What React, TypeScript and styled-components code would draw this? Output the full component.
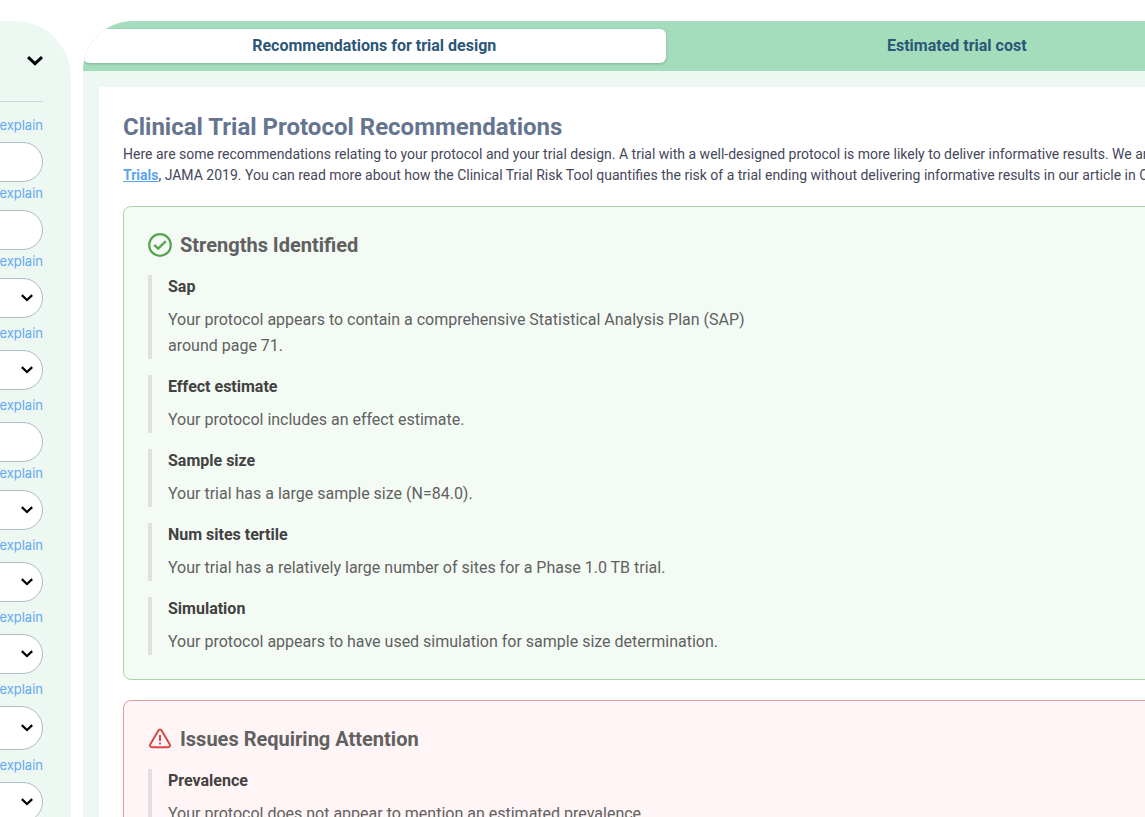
import React from "react";
import styled, { createGlobalStyle } from "styled-components";

const GlobalStyle = createGlobalStyle`
  * { box-sizing: border-box; }
  body {
    margin: 0;
    background: #ffffff;
    font-family: Roboto, "Liberation Sans", sans-serif;
    overflow: hidden;
  }
  h1, h2, h3, p { margin: 0; }
`;

const Page = styled.div`
  display: flex;
  align-items: stretch;
  gap: 12px;
  height: 100vh;
  padding-top: 21px;
  overflow: hidden;
`;

const Sidebar = styled.aside`
  flex: 0 0 320px;
  margin-left: -249px;
  padding: 0 28px;
  background: #eef8f3;
  border-top-right-radius: 56px;
  overflow: hidden;
`;

const SidebarHead = styled.div`
  display: flex;
  align-items: center;
  justify-content: flex-end;
  height: 81px;
  margin-bottom: 12px;
  border-bottom: 1px solid #c9d6da;
`;

const CollapseButton = styled.button`
  display: flex;
  padding: 0;
  border: 0;
  background: none;
  color: #000000;
`;

const Field = styled.div<{ $gap: number }>`
  margin-bottom: ${(p) => p.$gap}px;
`;

const ExplainLink = styled.a`
  display: block;
  margin-bottom: 6px;
  color: #62a8f2;
  font: 400 13px/22px Inter, "Open Sans", sans-serif;
  text-align: right;
  text-decoration: none;
`;

const TextInput = styled.input`
  display: block;
  width: 100%;
  height: 40px;
  border: 1px solid #b0bcc4;
  border-radius: 20px;
  background: #ffffff;
`;

const SelectWrap = styled.div`
  position: relative;
  svg {
    position: absolute;
    right: 10px;
    top: 50%;
    margin-top: -6px;
    pointer-events: none;
  }
`;

const SelectBox = styled.select<{ $tall?: boolean }>`
  display: block;
  width: 100%;
  height: ${(p) => (p.$tall ? 44 : 40)}px;
  border: 1px solid #b0bcc4;
  border-radius: 22px;
  background: #ffffff;
  appearance: none;
`;

const Main = styled.main`
  flex: none;
  width: calc(100% + 20px);
  display: flex;
  flex-direction: column;
  background: #eef8f3;
  border-top-left-radius: 50px;
  overflow: hidden;
`;

const Tabs = styled.div`
  display: flex;
  flex: none;
  height: 50px;
  padding: 8px 0;
  background: #a3ddbc;
`;

const Tab = styled.button<{ $active?: boolean }>`
  flex: 1;
  border: 0;
  border-radius: 6px;
  background: ${(p) => (p.$active ? "#ffffff" : "transparent")};
  box-shadow: ${(p) => (p.$active ? "0 1px 3px rgba(0, 0, 0, 0.2)" : "none")};
  color: #2c5777;
  font: 700 16px/24px Roboto, sans-serif;
`;

const Panel = styled.section`
  flex: 1;
  margin: 16px 16px 0;
  padding: 24px;
  background: #ffffff;
`;

const Title = styled.h1`
  margin-bottom: 1px;
  color: #66758f;
  font-size: 24px;
  line-height: 32px;
`;

const Intro = styled.p`
  margin-bottom: 20px;
  color: #45475a;
  font-size: 14px;
  line-height: 21px;
  white-space: nowrap;
`;

const IntroLink = styled.a`
  color: #5ba4f0;
  font-weight: 700;
`;

const Card = styled.section<{ $tone: "good" | "bad" }>`
  margin-bottom: 20px;
  padding: 24px;
  border: 1px solid ${(p) => (p.$tone === "good" ? "#a8d5a8" : "#e59a9a")};
  border-radius: 8px;
  background: ${(p) => (p.$tone === "good" ? "#f4fbf4" : "#fff5f6")};
`;

const CardTitle = styled.h2`
  display: flex;
  align-items: center;
  gap: 8px;
  color: #616161;
  font-size: 20px;
  line-height: 28px;
`;

const Item = styled.div`
  margin-top: 16px;
  padding-left: 16px;
  border-left: 4px solid #e0e0e0;
`;

const ItemTitle = styled.h3`
  margin-bottom: 8px;
  color: #424242;
  font-size: 16px;
  line-height: 24px;
`;

const ItemText = styled.p`
  max-width: 600px;
  color: #616161;
  font-size: 16px;
  line-height: 26px;
`;

const Chevron = ({ size }: { size: number }) => (
  <svg width={size} height={size} viewBox="0 0 12 12" fill="none" stroke="currentColor" strokeWidth="2.2" aria-hidden="true">
    <path d="M0.8 3.1 6 8 11.2 3.1" />
  </svg>
);

const CheckIcon = () => (
  <svg width="24" height="24" viewBox="0 0 24 24" fill="none" stroke="#5aa552" strokeWidth="2.2" aria-hidden="true">
    <circle cx="12" cy="12" r="10.8" />
    <path d="M6.2 11.8 10.2 15.6 17.8 8.2" strokeWidth="2.4" />
  </svg>
);

const WarningIcon = () => (
  <svg width="24" height="24" viewBox="0 0 24 24" fill="none" stroke="#d8483f" strokeWidth="2" strokeLinejoin="round" aria-hidden="true">
    <path d="M10.4 3.5 2.2 17.6a1.8 1.8 0 0 0 1.6 2.6h16.4a1.8 1.8 0 0 0 1.6-2.6L13.6 3.5a1.8 1.8 0 0 0-3.2 0Z" />
    <path d="M12 8v6M12 15.4v2" />
  </svg>
);

type FieldSpec = { kind: "input" | "select"; tall?: boolean };

const fields: FieldSpec[] = [
  { kind: "input" },
  { kind: "input" },
  { kind: "select" },
  { kind: "select" },
  { kind: "input" },
  { kind: "select" },
  { kind: "select" },
  { kind: "select" },
  { kind: "select", tall: true },
  { kind: "select" },
];

const strengths = [
  ["Sap", "Your protocol appears to contain a comprehensive Statistical Analysis Plan (SAP) around page 71."],
  ["Effect estimate", "Your protocol includes an effect estimate."],
  ["Sample size", "Your trial has a large sample size (N=84.0)."],
  ["Num sites tertile", "Your trial has a relatively large number of sites for a Phase 1.0 TB trial."],
  ["Simulation", "Your protocol appears to have used simulation for sample size determination."],
];

const issues = [["Prevalence", "Your protocol does not appear to mention an estimated prevalence."]];

const Items = ({ rows }: { rows: string[][] }) => (
  <>
    {rows.map(([title, text]) => (
      <Item key={title}>
        <ItemTitle>{title}</ItemTitle>
        <ItemText>{text}</ItemText>
      </Item>
    ))}
  </>
);

export default function App() {
  return (
    <>
      <GlobalStyle />
      <Page>
        <Sidebar>
          <SidebarHead>
            <CollapseButton type="button" aria-label="Collapse parameters">
              <Chevron size={16} />
            </CollapseButton>
          </SidebarHead>
          {fields.map((f, i) => (
            <Field key={i} $gap={f.kind === "select" ? 4 : 0}>
              <ExplainLink href="#explain">explain</ExplainLink>
              {f.kind === "input" ? (
                <TextInput aria-label={`Parameter ${i + 1}`} />
              ) : (
                <SelectWrap>
                  <SelectBox $tall={f.tall} aria-label={`Parameter ${i + 1}`} />
                  <Chevron size={12} />
                </SelectWrap>
              )}
            </Field>
          ))}
        </Sidebar>
        <Main>
          <Tabs>
            <Tab type="button" $active>Recommendations for trial design</Tab>
            <Tab type="button">Estimated trial cost</Tab>
          </Tabs>
          <Panel>
            <Title>Clinical Trial Protocol Recommendations</Title>
            <Intro>
              Here are some recommendations relating to your protocol and your trial design. A trial with a well-designed
              protocol is more likely to deliver informative results. We are
              <br />
              <IntroLink href="#trials">Trials</IntroLink>, JAMA 2019. You can read more about how the Clinical Trial Risk
              Tool quantifies the risk of a trial ending without delivering informative results in our article in Clinical
            </Intro>
            <Card $tone="good">
              <CardTitle><CheckIcon />Strengths Identified</CardTitle>
              <Items rows={strengths} />
            </Card>
            <Card $tone="bad">
              <CardTitle><WarningIcon />Issues Requiring Attention</CardTitle>
              <Items rows={issues} />
            </Card>
          </Panel>
        </Main>
      </Page>
    </>
  );
}
